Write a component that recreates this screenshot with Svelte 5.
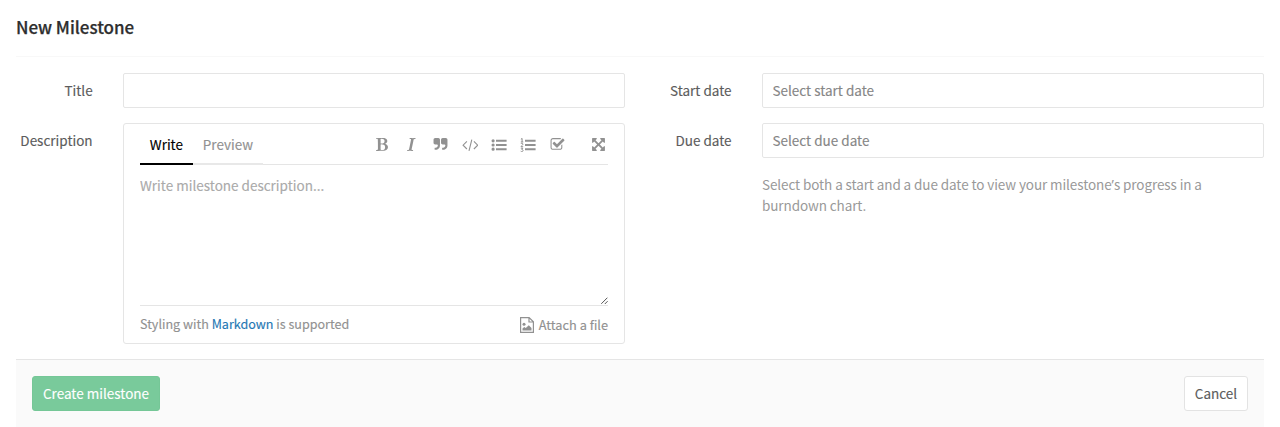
<script>
  const tools = [
    { name: 'Bold', box: '0 128 1408 1536', w: 12, h: 13, d: 'M555 1521q74 32 140 32 376 0 376-335 0-114-41-180-27-44-61.5-74t-67.5-46.5-80.5-25-84-10.5-94.5-2q-73 0-101 10 0 53-.5 159t-.5 158q0 8-1 67.5t-.5 96.5 4.5 83.5 12 66.5zm-14-746q42 7 109 7 82 0 143-13t110-44.5 74.5-89.5 25.5-142q0-70-29-122.5t-79-82-108-43.5-124-14q-50 0-130 13 0 50 4 151t4 152q0 27-.5 80t-.5 79q0 46 1 69zm-541 889l2-94q15-4 85-16t106-27q7-12 12.5-27t8.5-33.5 5.5-32.5 3-37.5.5-34v-65.5q0-982-22-1025-4-8-22-14.5t-44.5-11-49.5-7-48.5-4.5-30.5-3l-4-83q98-2 340-11.5t373-9.5q23 0 68 .5t68 .5q70 0 136.5 13t128.5 42 108 71 74 104.5 28 137.5q0 52-16.5 95.5t-39 72-64.5 57.5-73 45-84 40q154 35 256.5 134t102.5 248q0 100-35 179.5t-93.5 130.5-138 85.5-163.5 48.5-176 14q-44 0-132-3t-132-3q-106 0-307 11t-231 12z' },
    { name: 'Italic', box: '384 128 1024 1536', w: 8.7, h: 13, d: 'M384 1662l17-85q6-2 81.5-21.5t111.5-37.5q28-35 41-101 1-7 62-289t114-543.5 52-296.5v-25q-24-13-54.5-18.5t-69.5-8-58-5.5l19-103q33 2 120 6.5t149.5 7 120.5 2.5q48 0 98.5-2.5t121-7 98.5-6.5q-5 39-19 89-30 10-101.5 28.5t-108.5 33.5q-8 19-14 42.5t-9 40-7.5 45.5-6.5 42q-27 148-87.5 419.5t-77.5 355.5q-2 9-13 58t-20 90-16 83.5-6 57.5l1 18q17 4 185 31-3 44-16 99-11 0-32.5 1.5t-32.5 1.5q-29 0-87-10t-86-10q-138-2-206-2-51 0-143 9t-121 11z' },
    { name: 'Quote', box: '0 0 1792 1792', w: 15, h: 15, d: 'M832 320v704q0 104-40.5 198.5t-109.5 163.5-163.5 109.5-198.5 40.5h-64q-26 0-45-19t-19-45v-128q0-26 19-45t45-19h64q106 0 181-75t75-181v-32q0-40-28-68t-68-28h-224q-80 0-136-56t-56-136v-384q0-80 56-136t136-56h384q80 0 136 56t56 136zm896 0v704q0 104-40.5 198.5t-109.5 163.5-163.5 109.5-198.5 40.5h-64q-26 0-45-19t-19-45v-128q0-26 19-45t45-19h64q106 0 181-75t75-181v-32q0-40-28-68t-68-28h-224q-80 0-136-56t-56-136v-384q0-80 56-136t136-56h384q80 0 136 56t56 136z' },
    { name: 'Code', box: '0 0 16 14', w: 16, h: 14, line: 'M4.9 3.4L1.1 7.2l3.8 3.8M11.9 3.4l3.8 3.8-3.8 3.8M9.8 1.6L7 12.8', stroke: 1.1 },
    { name: 'Bulleted list', box: '0 0 16 14', w: 16, h: 14, d: 'M2.1 1.2a1.6 1.6 0 1 1 0 3.2a1.6 1.6 0 1 1 0-3.2zM2.1 5.4a1.6 1.6 0 1 1 0 3.2a1.6 1.6 0 1 1 0-3.2zM2.1 9.6a1.6 1.6 0 1 1 0 3.2a1.6 1.6 0 1 1 0-3.2zM5 1.8h10.6v2H5zM5 6h10.6v2H5zM5 10.2h10.6v2H5z' },
    { name: 'Numbered list', box: '0 0 16 14', w: 16, h: 14, d: 'M5 1.8h10.6v2H5zM5 6h10.6v2H5zM5 10.2h10.6v2H5z', line: 'M.9 1.3L2.1.4V4M.8 4H3.3M.8 5.9C1.2 4.9 3 5.1 2.9 6.3C2.8 7.2 1.1 7.7 1 8.7H3.2M.8 10.2H2.9L1.8 11.5C3.5 11.4 3.4 13.6 1.9 13.6C1.4 13.6 1 13.5.7 13.2' },
    { name: 'Task list', box: '0 0 1792 1792', w: 15, h: 15, d: 'M1472 930v318q0 119-84.5 203.5t-203.5 84.5h-832q-119 0-203.5-84.5t-84.5-203.5v-832q0-119 84.5-203.5t203.5-84.5h832q63 0 117 25 15 7 18 23 3 17-9 29l-49 49q-10 10-23 10-3 0-9-2-23-6-45-6h-832q-66 0-113 47t-47 113v832q0 66 47 113t113 47h832q66 0 113-47t47-113v-254q0-13 9-22l64-64q10-10 23-10 6 0 12 3 20 8 20 29zm231-489l-814 814q-24 24-57 24t-57-24l-430-430q-24-24-24-57t24-57l110-110q24-24 57-24t57 24l263 263 647-647q24-24 57-24t57 24l110 110q24 24 24 57t-24 57z' },
    { name: 'Full screen', box: '0 0 1792 1792', w: 15, h: 15, d: 'M1411 541l-355 355 355 355 144-144q29-31 70-14 39 17 39 59v448q0 26-19 45t-45 19h-448q-42 0-59-40-17-39 14-69l144-144-355-355-355 355 144 144q31 30 14 69-17 40-59 40h-448q-26 0-45-19t-19-45v-448q0-42 40-59 39-17 69 14l144 144 355-355-355-355-144 144q-19 19-45 19-12 0-24-5-40-17-40-59v-448q0-26 19-45t45-19h448q42 0 59 40 17 39-14 69l-144 144 355 355 355-355-144-144q-31-30-14-69 17-40 59-40h448q26 0 45 19t19 45v448q0 42-39 59-13 5-25 5-26 0-45-19z' }
  ];
</script>

<main>
  <h1>New Milestone</h1>
  <form>
    <div class="columns">
      <div class="fields">
        <label for="title">Title</label>
        <input id="title" />
        <label for="description">Description</label>
        <div class="editor">
          <div class="bar">
            <div class="tab active">Write</div>
            <div class="tab">Preview</div>
            <div class="tools">
              {#each tools as t}
                <button type="button" class="tool" aria-label={t.name}>
                  <svg width={t.w} height={t.h} viewBox={t.box}>
                    {#if t.d}<path d={t.d} fill="currentColor" />{/if}
                    {#if t.line}<path d={t.line} fill="none" stroke="currentColor" stroke-width={t.stroke ?? 1} />{/if}
                  </svg>
                </button>
              {/each}
            </div>
          </div>
          <div class="area">
            <textarea id="description" placeholder="Write milestone description..."></textarea>
            <svg class="grip" width="8" height="8" viewBox="0 0 8 8"><path d="M1.3 6.8l6.1-6.1M4.8 7l2.8-2.8" stroke="#555" fill="none" /></svg>
          </div>
          <div class="hint">
            <span class="styling">Styling with <a href="#markdown">Markdown</a> is supported</span>
            <button type="button" class="attach">
              <svg width="14" height="16" viewBox="0 0 14 16">
                <path d="M.6.6h8.5l4.3 4.2v10.6H.6zM9 .8V5h4.2" fill="none" stroke="currentColor" stroke-width="1.2" />
                <circle cx="4" cy="7.3" r="1.5" fill="currentColor" />
                <path d="M2.5 13.5v-2l1.7-1.4 1.6 1 3-2.9 2.7 2.8v2.5z" fill="currentColor" />
              </svg>
              <span>Attach a file</span>
            </button>
          </div>
        </div>
      </div>
      <div class="fields">
        <label for="start">Start date</label>
        <input id="start" placeholder="Select start date" />
        <label for="due">Due date</label>
        <div>
          <input id="due" placeholder="Select due date" />
          <p>Select both a start and a due date to view your milestone<span class="mark">’</span>s progress in a<br />burndown chart.</p>
        </div>
      </div>
    </div>
    <footer>
      <button type="button" class="btn create">Create milestone</button>
      <button type="button" class="btn cancel">Cancel</button>
    </footer>
  </form>
</main>

<style>
  :global(body) { background: #fff; overflow: hidden; }
  main, input, textarea, button { font-family: "Noto Sans CJK SC", "Noto Sans", sans-serif; font-size: 13.5px; -webkit-text-stroke: 0.14px; }
  main, main * { box-sizing: border-box; }
  main { height: 427px; padding: 0 16px; color: #5c5c5c; line-height: 20px; }
  h1 { margin: 0; height: 57px; padding-top: 15px; border-bottom: 1px solid #f8f8f8; font-size: 16.95px; line-height: 24px; font-weight: 500; color: #2e2e2e; -webkit-text-stroke: 0.25px; }
  .columns { display: grid; grid-template-columns: 609px 609px; column-gap: 30px; padding-top: 16px; height: 302px; }
  .fields { display: grid; grid-template-columns: 77px 502px; column-gap: 30px; row-gap: 15px; align-content: start; }
  label { text-align: right; padding: 7px 0.4px 0 0; }
  input { display: block; width: 502px; height: 35px; margin: 0; padding: 0 9.5px 2px; border: 1px solid #e5e5e5; border-radius: 2px; outline: 0; background: #fff; }
  ::placeholder { color: #868686; opacity: 1; }
  .editor { height: 221px; border: 1px solid #e5e5e5; border-radius: 3px; padding: 0 16px; }
  .bar { display: flex; height: 41px; border-bottom: 1px solid #e5e5e5; }
  .tab { height: 41px; padding: 10px 10px 0 9.8px; border-bottom: 2px solid #e8e8e8; color: #919191; }
  .active { color: #000; border-color: #000; }
  .tools { display: flex; margin-left: auto; margin-right: -5px; height: 41px; align-items: center; }
  .tool { width: 29.25px; height: 20px; padding: 0; border: 0; background: none; color: #919191; display: flex; align-items: center; justify-content: center; }
  .tool:last-child { margin-left: 11.5px; }
  .area { position: relative; height: 141px; border-bottom: 1px solid #e5e5e5; }
  textarea { display: block; width: 100%; height: 140px; padding: 10px 0 0; border: 0; outline: 0; resize: none; background: none; line-height: 20px; }
  textarea::placeholder { color: #aaa; }
  .grip { position: absolute; right: 0; bottom: 0; }
  .hint { display: flex; justify-content: space-between; align-items: center; height: 37px; color: #919191; }
  .styling { font-size: 12.55px; padding-bottom: 1px; }
  a { color: #1f78b4; text-decoration: none; }
  .attach { display: flex; align-items: center; gap: 5px; padding: 0; border: 0; background: none; color: #919191; font-size: 12.75px; }
  p { margin: 16px 0 0; line-height: 21px; color: #999; letter-spacing: -0.093px; -webkit-text-stroke: 0; }
  .mark { font-family: "Noto Sans", sans-serif; line-height: 1; }
  footer { display: flex; justify-content: space-between; height: 68px; padding: 16px; background: #fafafa; border-top: 1px solid #e5e5e5; }
  .btn { height: 35px; padding: 0 0 2px; border-radius: 3px; border: 1px solid #e3e3e3; background: #fff; color: #5c5c5c; }
  .create { width: 128px; background: #79ca9b; border-color: #75c797; color: #fff; }
  .cancel { width: 64px; }
</style>
